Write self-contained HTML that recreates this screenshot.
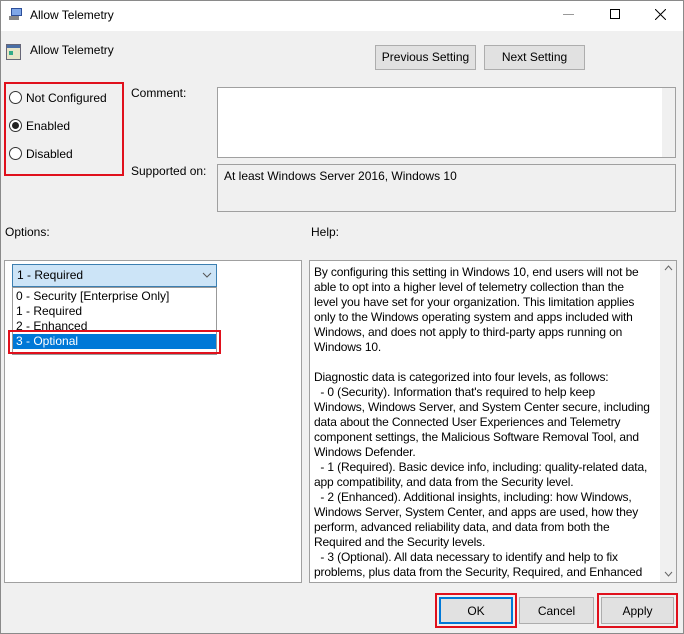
<!DOCTYPE html>
<html><head><style>
*{margin:0;padding:0;box-sizing:border-box}
body{width:684px;height:634px;overflow:hidden;background:#f0f0f0;font-family:"Liberation Sans",sans-serif;font-size:12px;color:#000;position:relative}
.a{position:absolute}
.btn{position:absolute;background:#e1e1e1;border:1px solid #adadad;text-align:center;line-height:23px}
.rb{position:absolute;border:2px solid #e0101c}
.radio{position:absolute;width:13px;height:13px;border:1px solid #333;border-radius:50%;background:#fff}
.box{position:absolute;background:#fff;border:1px solid #a0a0a0}
.help div{white-space:nowrap;letter-spacing:-0.15px}
</style></head><body>
<div class="a" style="left:0;top:0;width:684px;height:31px;background:#fff"></div>
<div class="a" style="left:0;top:0;width:684px;height:634px;border:1px solid #8a8a8a"></div>
<svg class="a" style="left:8px;top:7px" width="16" height="14"><rect x="3" y="1" width="11" height="8" fill="#2d4f9a"/><rect x="4" y="2" width="9" height="6" fill="#7fa7e8"/><rect x="1" y="9" width="10" height="4" fill="#888"/></svg>
<div class="a" style="left:30px;top:8px">Allow Telemetry</div>
<div class="a" style="left:563px;top:14px;width:11px;height:1px;background:#999"></div>
<div class="a" style="left:610px;top:9px;width:10px;height:10px;border:1px solid #000"></div>
<svg class="a" style="left:655px;top:9px" width="11" height="11"><path d="M0 0L11 11M11 0L0 11" stroke="#000" stroke-width="1"/></svg>
<svg class="a" style="left:6px;top:44px" width="16" height="17"><rect x="0.5" y="0.5" width="14" height="15" fill="#e8e4c8" stroke="#667"/><rect x="1" y="1" width="13" height="3" fill="#4a6fa5"/><rect x="3" y="7" width="4" height="4" fill="#3a8"/></svg>
<div class="a" style="left:30px;top:43px">Allow Telemetry</div>
<div class="btn" style="left:375px;top:45px;width:101px;height:25px">Previous Setting</div>
<div class="btn" style="left:484px;top:45px;width:101px;height:25px">Next Setting</div>
<div class="rb" style="left:4px;top:82px;width:120px;height:94px"></div>
<div class="radio" style="left:9px;top:91px"></div>
<div class="a" style="left:26px;top:91px">Not Configured</div>
<div class="radio" style="left:9px;top:119px"></div>
<div class="a" style="left:12px;top:122px;width:7px;height:7px;border-radius:50%;background:#222"></div>
<div class="a" style="left:26px;top:119px">Enabled</div>
<div class="radio" style="left:9px;top:147px"></div>
<div class="a" style="left:26px;top:147px">Disabled</div>
<div class="a" style="left:131px;top:86px">Comment:</div>
<div class="box" style="left:217px;top:87px;width:459px;height:71px"></div>
<div class="a" style="left:662px;top:88px;width:13px;height:69px;background:#f0f0f0"></div>
<div class="a" style="left:131px;top:164px">Supported on:</div>
<div class="box" style="left:217px;top:164px;width:459px;height:48px;background:#f0f0f0"></div>
<div class="a" style="left:224px;top:169px">At least Windows Server 2016, Windows 10</div>
<div class="a" style="left:5px;top:225px">Options:</div>
<div class="a" style="left:311px;top:225px">Help:</div>
<div class="box" style="left:4px;top:260px;width:298px;height:323px"></div>
<div class="a" style="left:12px;top:264px;width:205px;height:23px;background:#cce4f7;border:1px solid #3c7fb1"></div>
<div class="a" style="left:17px;top:268px">1 - Required</div>
<svg class="a" style="left:202px;top:272px" width="10" height="6"><path d="M1 1L5 5L9 1" stroke="#555" fill="none"/></svg>
<div class="a" style="left:12px;top:287px;width:205px;height:68px;background:#fff;border:1px solid #999"></div>
<div class="a" style="left:16px;top:289px">0 - Security [Enterprise Only]</div>
<div class="a" style="left:16px;top:304px">1 - Required</div>
<div class="a" style="left:16px;top:319px">2 - Enhanced</div>
<div class="a" style="left:13px;top:334px;width:203px;height:15px;background:#0078d7"></div>
<div class="a" style="left:16px;top:334px;color:#fff">3 - Optional</div>
<div class="rb" style="left:8px;top:330px;width:213px;height:24px"></div>
<div class="box help" style="left:309px;top:260px;width:368px;height:323px;padding:4px 0 0 4px;line-height:15px;overflow:hidden">
<div>By configuring this setting in Windows 10, end users will not be</div>
<div>able to opt into a higher level of telemetry collection than the</div>
<div>level you have set for your organization.  This limitation applies</div>
<div>only to the Windows operating system and apps included with</div>
<div>Windows, and does not apply to third-party apps running on</div>
<div>Windows 10.</div>
<div>&nbsp;</div>
<div>Diagnostic data is categorized into four levels, as follows:</div>
<div>&nbsp; - 0 (Security). Information that's required to help keep</div>
<div>Windows, Windows Server, and System Center secure, including</div>
<div>data about the Connected User Experiences and Telemetry</div>
<div>component settings, the Malicious Software Removal Tool, and</div>
<div>Windows Defender.</div>
<div>&nbsp; - 1 (Required). Basic device info, including: quality-related data,</div>
<div>app compatibility, and data from the Security level.</div>
<div>&nbsp; - 2 (Enhanced). Additional insights, including: how Windows,</div>
<div>Windows Server, System Center, and apps are used, how they</div>
<div>perform, advanced reliability data, and data from both the</div>
<div>Required and the Security levels.</div>
<div>&nbsp; - 3 (Optional). All data necessary to identify and help to fix</div>
<div>problems, plus data from the Security, Required, and Enhanced</div>
<div>levels.</div>
</div>
<div class="a" style="left:660px;top:261px;width:16px;height:321px;background:#f0f0f0"></div>
<svg class="a" style="left:664px;top:265px" width="9" height="6"><path d="M1 5L4.5 1L8 5" stroke="#666" fill="none"/></svg>
<svg class="a" style="left:664px;top:571px" width="9" height="6"><path d="M1 1L4.5 5L8 1" stroke="#666" fill="none"/></svg>
<div class="rb" style="left:435px;top:593px;width:82px;height:35px"></div>
<div class="btn" style="left:439px;top:597px;width:74px;height:27px;border:2px solid #0078d7;line-height:24px">OK</div>
<div class="btn" style="left:519px;top:597px;width:75px;height:27px;line-height:26px">Cancel</div>
<div class="rb" style="left:597px;top:593px;width:81px;height:35px"></div>
<div class="btn" style="left:601px;top:597px;width:73px;height:27px;line-height:26px">Apply</div>
</body></html>
